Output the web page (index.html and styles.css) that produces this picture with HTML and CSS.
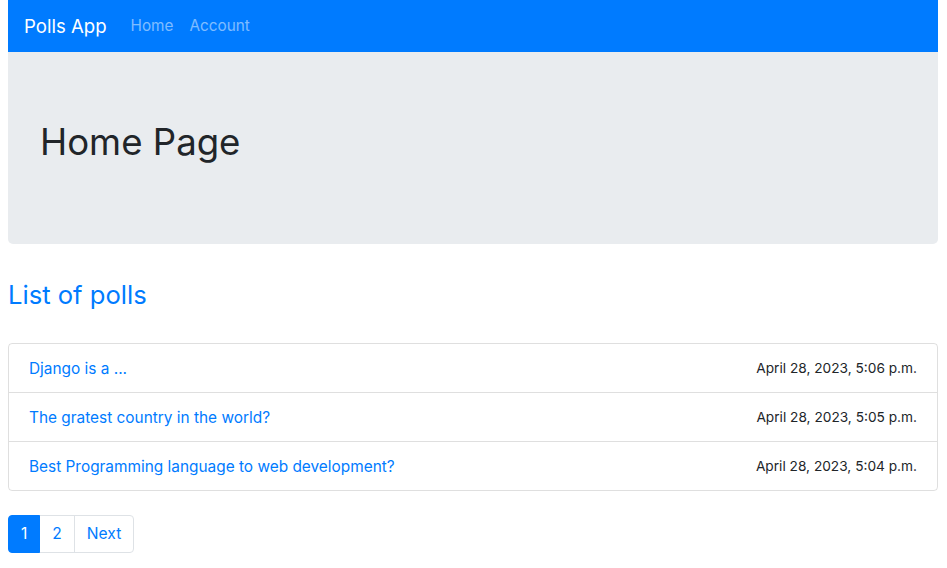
FILE: index.html
```html
<!DOCTYPE html>
<html lang="en">
<head>
<meta charset="utf-8">
<title>Polls App</title>
<link rel="stylesheet" href="styles.css">
</head>
<body>
<div class="container">
  <nav class="navbar">
    <a class="brand" href="#">Polls App</a>
    <a class="nav-link" href="#">Home</a>
    <a class="nav-link" href="#">Account</a>
  </nav>
  <div class="jumbotron">
    <h1>Home Page</h1>
  </div>
  <h3 class="section-title">List of polls</h3>
  <ul class="list-group">
    <li class="list-item"><a href="#">Django is a ...</a><small>April 28, 2023, 5:06 p.m.</small></li>
    <li class="list-item"><a href="#">The gratest country in the world?</a><small>April 28, 2023, 5:05 p.m.</small></li>
    <li class="list-item"><a href="#">Best Programming language to web development?</a><small>April 28, 2023, 5:04 p.m.</small></li>
  </ul>
  <ul class="pagination">
    <li class="page-item active"><a href="#">1</a></li>
    <li class="page-item"><a href="#">2</a></li>
    <li class="page-item"><a href="#">Next</a></li>
  </ul>
</div>
</body>
</html>
```
FILE: styles.css
```css
* { box-sizing: border-box; }
html, body { margin: 0; padding: 0; }
body {
  font-family: Inter, "Liberation Sans", sans-serif;
  font-size: 16px;
  line-height: 1.5;
  color: #212529;
  background: #fff;
}
a { text-decoration: none; color: #007bff; }
.container { padding: 0 9px 0 8px; }
.navbar {
  height: 52px;
  background: #007bff;
  display: flex;
  align-items: center;
  padding: 0 16px;
}
.brand {
  color: #fff;
  font-size: 18.6px;
  margin-right: 16px;
  line-height: 30px;
}
.nav-link {
  color: rgba(255,255,255,0.5);
  padding: 0 8px;
  font-size: 15.3px;
  line-height: 24px;
  margin-top: -1px;
}
.jumbotron {
  background: #e9ecef;
  height: 192px;
  padding: 0 32px;
  display: flex;
  align-items: center;
  border-radius: 0 0 5px 5px;
  margin-bottom: 32px;
}
.jumbotron h1 {
  margin: 0 0 10px;
  font-size: 36.6px;
  font-weight: 400;
  line-height: 1.2;
}
.section-title {
  margin: 0 0 32px;
  font-size: 25.6px;
  font-weight: 400;
  line-height: 1.2;
  color: #007bff;
  padding-top: 4px;
}
.list-group {
  list-style: none;
  margin: 0 0 24px;
  padding: 0;
  border: 1px solid rgba(0,0,0,0.125);
  border-radius: 4px;
}
.list-item {
  display: flex;
  justify-content: space-between;
  align-items: center;
  height: 49px;
  padding: 1px 20px 0;
  border-top: 1px solid rgba(0,0,0,0.125);
  font-size: 15.4px;
}
.list-item:first-child { border-top: 0; height: 48px; }
.list-item small { font-size: 13.7px; color: #212529; }
.pagination {
  list-style: none;
  margin: 0;
  padding: 0;
  display: flex;
}
.page-item a {
  display: block;
  height: 38px;
  line-height: 36px;
  padding: 0 12px;
  border: 1px solid #dee2e6;
  margin-left: -1px;
  color: #007bff;
  font-size: 15.6px;
}
.page-item:first-child a { margin-left: 0; border-radius: 4px 0 0 4px; }
.page-item:last-child a { border-radius: 0 4px 4px 0; }
.page-item.active a { background: #007bff; border-color: #007bff; color: #fff; position: relative; }
```
